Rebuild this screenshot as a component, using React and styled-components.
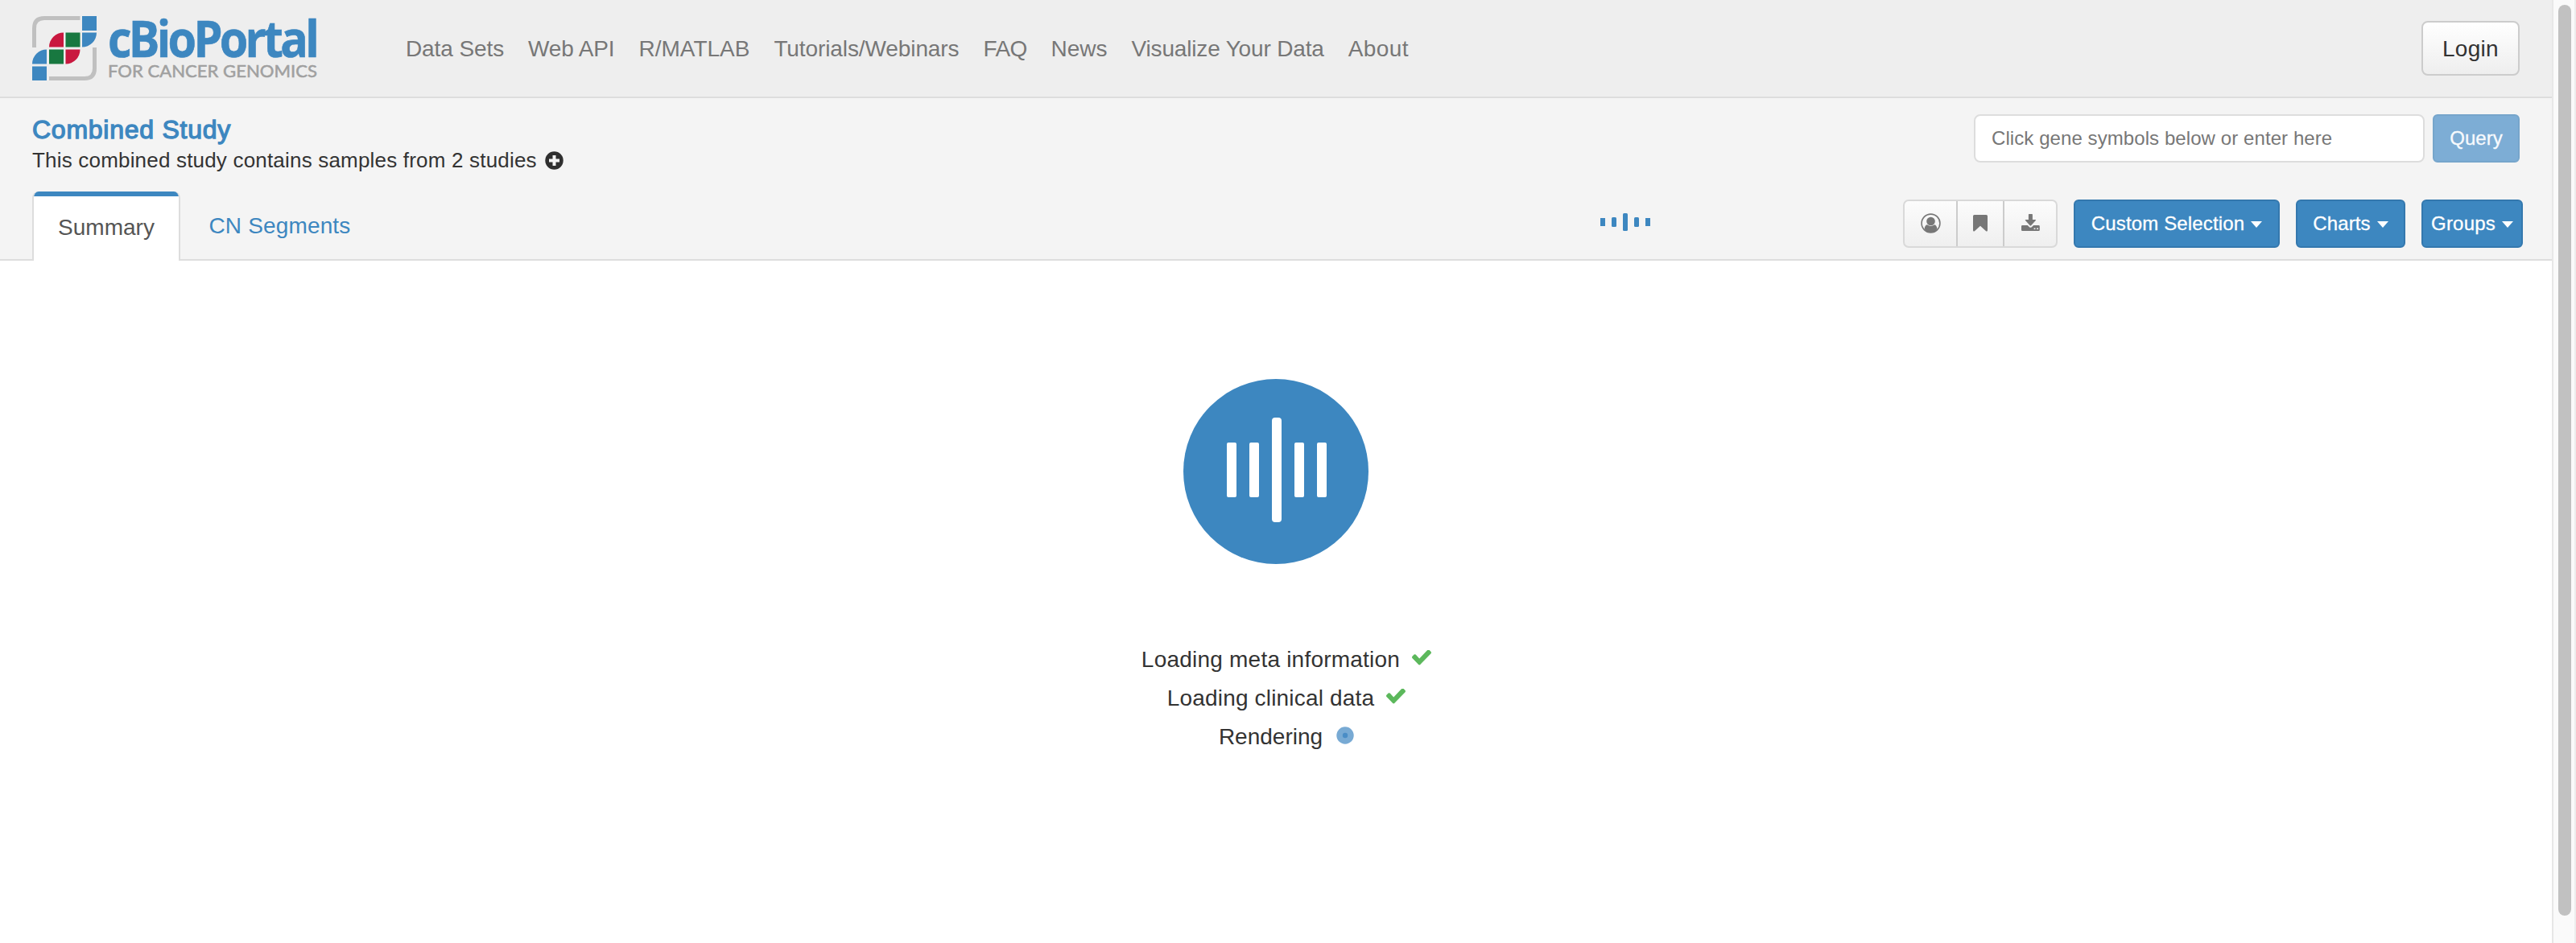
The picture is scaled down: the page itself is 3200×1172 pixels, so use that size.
import React from "react";
import styled, { createGlobalStyle } from "styled-components";

const BLUE = "#3d87c0";

const GlobalStyle = createGlobalStyle`
  * { box-sizing: border-box; }
  body {
    margin: 0;
    background: #fff;
    color: #333;
    font-family: "Liberation Sans", Arial, sans-serif;
    font-size: 28px;
    overflow: hidden;
  }
`;

const Window = styled.div`
  display: flex;
  height: 1172px;
`;

const Page = styled.div`
  flex: 1;
  display: flex;
  flex-direction: column;
`;

const ScrollTrack = styled.div`
  width: 30px;
  padding: 6px 4px 34px 6px;
  display: flex;
  background: #fafafa;
  border-left: 2px solid #e7e7e7;
  border-right: 2px solid #ededed;
`;

const ScrollThumb = styled.div`
  flex: 1;
  border-radius: 8px;
  background: #c1c1c1;
`;

const Header = styled.header`
  height: 122px;
  display: flex;
  align-items: center;
  padding: 0 40px;
  background: #eee;
  border-bottom: 2px solid #ddd;
`;

const Logo = styled.svg`
  width: 360px;
  height: 120px;
`;

const LogoName = styled.text`
  font-family: "Open Sans", sans-serif;
  font-weight: 700;
  font-size: 62px;
  letter-spacing: -4px;
  fill: ${BLUE};
  stroke: ${BLUE};
  stroke-width: 0.6px;
`;

const LogoTagline = styled.text`
  font-family: Lato, sans-serif;
  font-size: 20.5px;
  fill: #a0a0a0;
  stroke: #a0a0a0;
  stroke-width: 0.5px;
`;

const Nav = styled.nav`
  flex: 1;
  display: flex;
  gap: 30px;
  margin-left: 104px;
  padding-top: 1px;
`;

const NavLink = styled.a`
  color: #777;
  white-space: nowrap;
  letter-spacing: ${(p) => p.$tracking}px;
`;

const LoginButton = styled.button`
  width: 122px;
  height: 68px;
  padding: 1px 0 0;
  border: 2px solid #ccc;
  border-radius: 8px;
  background: linear-gradient(#fff, #eee);
  color: #333;
  font: inherit;
  letter-spacing: 0.3px;
`;

const StudyHeader = styled.section`
  height: 202px;
  display: flex;
  flex-direction: column;
  background: #f4f4f4;
  border-bottom: 2px solid #ddd;
`;

const StudyTop = styled.div`
  height: 116px;
  flex-shrink: 0;
  display: flex;
  justify-content: space-between;
  padding: 20px 40px 0;
`;

const StudyTitle = styled.h3`
  margin: 0;
  height: 39px;
  line-height: 38px;
  font-size: 32px;
  font-weight: 400;
  letter-spacing: 0.75px;
  color: ${BLUE};
  -webkit-text-stroke: 1.3px ${BLUE};
`;

const StudyDescription = styled.div`
  display: flex;
  align-items: center;
  gap: 10px;
  height: 36px;
  font-size: 26px;
  letter-spacing: 0.19px;
`;

const QueryForm = styled.form`
  display: flex;
  gap: 10px;
  height: 60px;
`;

const GeneInput = styled.input`
  width: 560px;
  padding: 0 20px;
  border: 2px solid #ddd;
  border-radius: 8px;
  background: #fff;
  font: inherit;
  font-size: 24px;
  letter-spacing: 0.08px;
  &::placeholder { color: #777; opacity: 1; }
`;

const PrimaryButton = styled.button`
  width: ${(p) => p.$width}px;
  height: 60px;
  padding: 0;
  display: flex;
  align-items: center;
  justify-content: center;
  gap: 8px;
  border: 2px solid ${(p) => (p.$muted ? "#76a5cb" : "#3478ae")};
  border-radius: 6px;
  background: ${(p) => (p.$muted ? "#7dadd5" : BLUE)};
  color: ${(p) => (p.$muted ? "#f7fafd" : "#fff")};
  -webkit-text-stroke: 0.3px currentColor;
  font: inherit;
  font-size: 24px;
  letter-spacing: ${(p) => p.$tracking || 0}px;
`;

const Caret = styled.span`
  border-top: 8px solid #fff;
  border-left: 7px solid transparent;
  border-right: 7px solid transparent;
  margin-top: 2px;
`;

const TabRow = styled.div`
  height: 86px;
  flex-shrink: 0;
  display: flex;
  justify-content: space-between;
  padding: 0 36px 0 40px;
`;

const Tabs = styled.div`
  display: flex;
  gap: 4px;
`;

const ActiveTab = styled.a`
  width: 184px;
  display: flex;
  flex-direction: column;
  background: #fff;
  border: 2px solid #ddd;
  border-top: 0;
  border-bottom: 0;
  border-radius: 8px 8px 0 0;
  color: #555;
  text-align: center;
  line-height: 77px;
  overflow: hidden;
  &::before {
    content: "";
    height: 6px;
    flex-shrink: 0;
    background: ${BLUE};
  }
`;

const Tab = styled.a`
  padding: 0 31.5px;
  line-height: 85px;
  letter-spacing: 0.15px;
  color: ${BLUE};
`;

const Tools = styled.div`
  display: flex;
  gap: 20px;
  padding-top: 10px;
`;

const SmallBars = styled.div`
  display: flex;
  align-items: center;
  gap: 8px;
  height: 56px;
  margin-right: 294px;
`;

const Bar = styled.span`
  width: ${(p) => p.$width}px;
  height: ${(p) => p.$height}px;
  border-radius: ${(p) => p.$radius}px;
  background: ${(p) => p.$color};
`;

const IconGroup = styled.div`
  width: 192px;
  height: 60px;
  display: grid;
  grid-template-columns: 66px 58px 1fr;
  border: 2px solid #d9d9d9;
  border-radius: 7px;
  background: linear-gradient(#fcfcfc, #efefef);
`;

const IconButton = styled.button`
  display: flex;
  align-items: center;
  justify-content: center;
  padding: 0 0 1px;
  background: none;
  border: 0;
  border-right: 2px solid #ccc;
  color: #777;
  &:last-child { border-right: 0; padding-bottom: 4px; }
`;

const Main = styled.main`
  flex: 1;
  display: flex;
  flex-direction: column;
  align-items: center;
  padding-top: 147px;
`;

const LoaderDisc = styled.div`
  width: 230px;
  height: 230px;
  display: flex;
  align-items: center;
  justify-content: center;
  gap: 16px;
  padding: 0 0 4px 2px;
  border-radius: 50%;
  background: ${BLUE};
`;

const Steps = styled.ul`
  list-style: none;
  margin: 95px 0 0;
  padding: 0 0 0 26px;
`;

const Step = styled.li`
  height: 48px;
  display: flex;
  align-items: center;
  justify-content: center;
  gap: ${(p) => p.$gap}px;
  letter-spacing: ${(p) => p.$tracking}px;
`;

const StepIcon = styled.svg`
  margin-bottom: 5px;
`;

const links = [
  ["Data Sets", -0.1],
  ["Web API", -0.15],
  ["R/MATLAB", 0],
  ["Tutorials/Webinars", -0.1],
  ["FAQ", -0.65],
  ["News", 0],
  ["Visualize Your Data", -0.17],
  ["About", 0.4],
];

const PlusCircle = () => (
  <svg width="23" height="23" viewBox="0 0 23 23">
    <circle cx="11.5" cy="11.5" r="11.2" fill="#2f2f2f" />
    <path d="M11.5 5v13M5 11.5h13" stroke="#f4f4f4" strokeWidth="4" />
  </svg>
);

const UserIcon = () => (
  <svg width="25" height="25" viewBox="0 0 25 25" fill="currentColor">
    <circle cx="12.5" cy="12.5" r="11.4" fill="none" stroke="currentColor" strokeWidth="1.6" />
    <circle cx="12.5" cy="10" r="5.3" />
    <path d="M8 14.2q4.5 3.4 9 0 3 .6 3.4 5.6-3.2 4.200-7.900 4.200t-7.900-4.200q.4-5 3.400-5.600z" />
  </svg>
);

const BookmarkIcon = () => (
  <svg width="18" height="21" viewBox="0 0 18 21" fill="currentColor">
    <path d="M1.6 0h14.8q1.6 0 1.6 1.6v17.4q0 2-1.6 1.4L9 13.8 1.6 20.4Q0 21 0 19V1.6Q0 0 1.6 0z" />
  </svg>
);

const DownloadIcon = () => (
  <svg width="23" height="21" viewBox="0 0 23 21" fill="currentColor">
    <path d="M9.600 0h3.600q.7 0 .7.7V7h3.400q1.300.1.5 1.100l-5.700 6.200q-.7.7-1.400 0L5 8.100q-.8-1 .5-1.100h3.400V.7q0-.7.7-.7z" />
    <path
      fillRule="evenodd"
      d="M1.300 14h6.400l2.600 2.400q1.100.8 2.200 0L15.200 14h6.300q1.300 0 1.300 1.300v4.400q0 1.300-1.300 1.300H1.300Q0 21 0 19.700v-4.400Q0 14 1.300 14zM15.600 17.400v1.600h1.800v-1.600zM19.200 17.400v1.600H21v-1.600z"
    />
  </svg>
);

const CheckIcon = () => (
  <StepIcon width="24" height="19" viewBox="121 376 1550 1176" preserveAspectRatio="none" fill="#5cb85c">
    <path d="M1671 566q0 40-28 68l-724 724-136 136q-28 28-68 28t-68-28l-136-136-362-362q-28-28-28-68t28-68l136-136q28-28 68-28t68 28l294 295 656-657q28-28 68-28t68 28l136 136q28 28 28 68z" />
  </StepIcon>
);

const PulseIcon = () => (
  <StepIcon width="22" height="22" viewBox="0 0 22 22">
    <circle cx="11" cy="11" r="10.7" fill="#78aad4" />
    <circle cx="11" cy="11" r="3.2" fill="#4a8dc6" />
  </StepIcon>
);

const LogoMark = () => (
  <g>
    <path
      d="M2.5 39V15Q2.5 2.5 15 2.5H59.5M21 77.5H65Q77.5 77.5 77.5 65V39"
      fill="none"
      stroke="#c0c0c0"
      strokeWidth="5"
    />
    <path d="M62 0h18v18H62zM62 20.5h18a18 18 0 0 1-18 18zM0 59.5a18 18 0 0 1 18-18v18zM0 62.5h18V80H0z" fill={BLUE} />
    <path d="M21 38.5a18 18 0 0 1 18-18v18zM41.5 41.5h18a18 18 0 0 1-18 18z" fill="#c9183f" />
    <path d="M41.5 20.5h18v18h-18zM21 41.5h18v18H21z" fill="#187840" />
  </g>
);

export default function App() {
  return (
    <Window>
      <GlobalStyle />
      <Page>
        <Header>
          <Logo viewBox="0 -20 360 120">
            <LogoMark />
            <LogoName x="94" y="50.5" textLength="259" lengthAdjust="spacingAndGlyphs">cBioPortal</LogoName>
            <LogoTagline x="94" y="76" textLength="260" lengthAdjust="spacingAndGlyphs">FOR CANCER GENOMICS</LogoTagline>
          </Logo>
          <Nav>
            {links.map(([label, tracking]) => (
              <NavLink key={label} $tracking={tracking}>{label}</NavLink>
            ))}
          </Nav>
          <LoginButton>Login</LoginButton>
        </Header>

        <StudyHeader>
          <StudyTop>
            <div>
              <StudyTitle>Combined Study</StudyTitle>
              <StudyDescription>
                This combined study contains samples from 2 studies
                <PlusCircle />
              </StudyDescription>
            </div>
            <QueryForm>
              <GeneInput placeholder="Click gene symbols below or enter here" />
              <PrimaryButton type="button" $width={108} $muted>Query</PrimaryButton>
            </QueryForm>
          </StudyTop>
          <TabRow>
            <Tabs>
              <ActiveTab>Summary</ActiveTab>
              <Tab>CN Segments</Tab>
            </Tabs>
            <Tools>
              <SmallBars>
                {[10, 12, 22, 12, 10].map((h, i) => (
                  <Bar key={i} $width={6} $height={h} $radius={h > 10 ? 1.5 : 0} $color={BLUE} />
                ))}
              </SmallBars>
              <IconGroup>
                <IconButton><UserIcon /></IconButton>
                <IconButton><BookmarkIcon /></IconButton>
                <IconButton><DownloadIcon /></IconButton>
              </IconGroup>
              <PrimaryButton $width={256} $tracking={0.15}>Custom Selection<Caret /></PrimaryButton>
              <PrimaryButton $width={136} $tracking={0.1}>Charts<Caret /></PrimaryButton>
              <PrimaryButton $width={126} $tracking={0.2}>Groups<Caret /></PrimaryButton>
            </Tools>
          </TabRow>
        </StudyHeader>

        <Main>
          <LoaderDisc>
            {[68, 68, 130, 68, 68].map((h, i) => (
              <Bar key={i} $width={12} $height={h} $radius={h > 100 ? 4 : 2} $color="#fff" />
            ))}
          </LoaderDisc>
          <Steps>
            <Step $gap={15} $tracking={0.22}>Loading meta information<CheckIcon /></Step>
            <Step $gap={15} $tracking={0.18}>Loading clinical data<CheckIcon /></Step>
            <Step $gap={17} $tracking={0}>Rendering<PulseIcon /></Step>
          </Steps>
        </Main>
      </Page>
      <ScrollTrack>
        <ScrollThumb />
      </ScrollTrack>
    </Window>
  );
}
